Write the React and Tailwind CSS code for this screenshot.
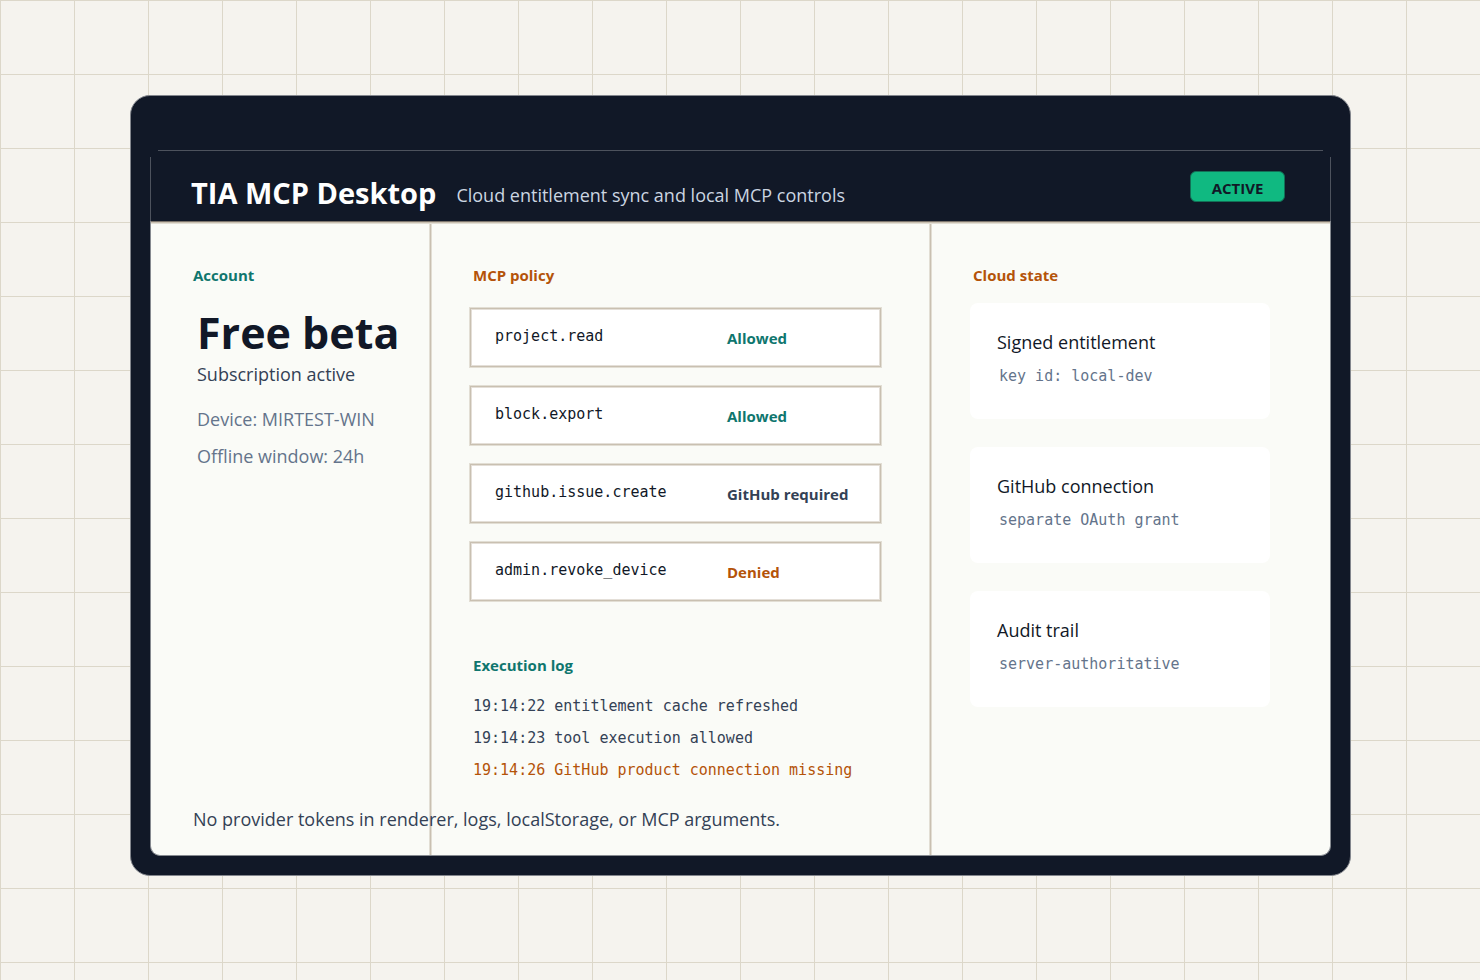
const tools = [
  { name: 'project.read', status: 'Allowed', tone: 'text-[#0f766e]' },
  { name: 'block.export', status: 'Allowed', tone: 'text-[#0f766e]' },
  { name: 'github.issue.create', status: 'GitHub required', tone: 'text-[#334155]' },
  { name: 'admin.revoke_device', status: 'Denied', tone: 'text-[#b45309]' },
];

const logs = [
  { text: '19:14:22 entitlement cache refreshed', tone: 'text-[#334155]' },
  { text: '19:14:23 tool execution allowed', tone: 'text-[#334155]' },
  { text: '19:14:26 GitHub product connection missing', tone: 'text-[#b45309]' },
];

const cloud = [
  { title: 'Signed entitlement', detail: 'key id: local-dev' },
  { title: 'GitHub connection', detail: 'separate OAuth grant' },
  { title: 'Audit trail', detail: 'server-authoritative' },
];

function SectionTitle({ tone, children }) {
  return <h2 className={`text-[15px] leading-6 font-bold ${tone}`}>{children}</h2>;
}

function Header() {
  return (
    <header className="flex h-[70px] items-start justify-between border-x pl-10 pr-[45px] [border-image:linear-gradient(to_bottom,transparent_7px,#4d525d_7px)_1]">
      <div className="flex items-start gap-5 pt-[22px]">
        <h1 className="text-[29px] leading-10 font-bold whitespace-nowrap text-white">TIA MCP Desktop</h1>
        <p className="pt-[10px] text-[18px] leading-6 whitespace-nowrap text-[#cbd5e1]">Cloud entitlement sync and local MCP controls</p>
      </div>
      <span className="mt-5 flex h-[31px] w-[95px] items-center justify-center rounded-md border border-[#127056] bg-[#10b981] pt-0.5 text-[15px] leading-5 font-bold text-[#111827]">
        ACTIVE
      </span>
    </header>
  );
}

function Account() {
  return (
    <section className="px-[42px] pt-[39px]">
      <SectionTitle tone="text-[#0f766e]">Account</SectionTitle>
      <div className="pl-1">
        <p className="mt-4 text-[43px] leading-[59px] font-bold whitespace-nowrap text-[#111827]">Free beta</p>
        <p className="text-[18px] leading-6 whitespace-nowrap text-[#334155]">Subscription active</p>
        <p className="mt-[21px] text-[18px] leading-6 whitespace-nowrap text-[#64748b]">Device: MIRTEST-WIN</p>
        <p className="mt-[13px] text-[18px] leading-6 whitespace-nowrap text-[#64748b]">Offline window: 24h</p>
      </div>
    </section>
  );
}

function Policy() {
  return (
    <section className="border-x border-[#c9c0b1] pt-[39px] pr-[49px] pl-[39px] shadow-[1px_0_#e2ded4,-1px_0_#e2ded4,inset_1px_0_#e2ded4,inset_-1px_0_#e2ded4]">
      <div className="pl-[3px]">
        <SectionTitle tone="text-[#b45309]">MCP policy</SectionTitle>
      </div>
      <ul className="mt-[21px] flex flex-col gap-[19px]">
        {tools.map((tool) => (
          <li key={tool.name} className="grid h-[59px] grid-cols-[232px_1fr] items-center border border-[#c9c0b1] bg-white pl-6 shadow-[0_0_0_1px_#e2ded4,inset_0_0_0_1px_#e4dfd8]">
            <span className="pb-1 font-['DejaVu_Sans_Mono',monospace] text-[15px] leading-5 text-[#111827]">{tool.name}</span>
            <span className={`text-[15px] leading-5 font-bold whitespace-nowrap ${tool.tone}`}>{tool.status}</span>
          </li>
        ))}
      </ul>
      <div className="mt-[52px] pl-[3px]">
        <SectionTitle tone="text-[#0f766e]">Execution log</SectionTitle>
        <ul className="mt-[13px] font-['DejaVu_Sans_Mono',monospace] text-[15px] leading-8 whitespace-nowrap">
          {logs.map((log) => (
            <li key={log.text} className={log.tone}>{log.text}</li>
          ))}
        </ul>
      </div>
    </section>
  );
}

function CloudState() {
  return (
    <section className="pt-[39px] pr-[60px] pl-[39px]">
      <div className="pl-[3px]">
        <SectionTitle tone="text-[#b45309]">Cloud state</SectionTitle>
      </div>
      <ul className="mt-4 flex flex-col gap-7">
        {cloud.map((item) => (
          <li key={item.title} className="h-[116px] rounded-lg bg-white px-[27px] pt-[27px]">
            <p className="text-[18px] leading-6 whitespace-nowrap text-[#111827]">{item.title}</p>
            <p className="mt-3 pl-0.5 font-['DejaVu_Sans_Mono',monospace] text-[15px] leading-5 whitespace-nowrap text-[#64748b]">{item.detail}</p>
          </li>
        ))}
      </ul>
    </section>
  );
}

export default function App() {
  return (
    <main className="min-h-screen bg-[#f5f3ee] bg-[linear-gradient(to_right,#dcd7c9_1px,transparent_1px),linear-gradient(to_bottom,#dcd7c9_1px,transparent_1px)] bg-[size:74px_74px] pt-[95px] pr-[129px] pb-[104px] pl-[130px] font-['Open_Sans',sans-serif]">
      <div className="rounded-[20px] border border-[#83868d] bg-[#111827] px-[19px] pt-[54px] pb-[19px]">
        <div className="mx-2 h-px bg-[#4d525d]" />
        <Header />
        <div className="relative rounded-b-[10px] border-x border-b border-[#868a90] bg-[#fafbf7]">
          <div className="h-[3px] border-t border-b border-t-[#7c756d] border-b-[#e2ded4] bg-[#c9c0b1]" />
          <div className="grid min-h-[631px] grid-cols-[279px_501px_1fr]">
            <Account />
            <Policy />
            <CloudState />
          </div>
          <p className="absolute bottom-6 left-[42px] text-[18px] leading-6 whitespace-nowrap text-[#334155]">
            No provider tokens in renderer, logs, localStorage, or MCP arguments.
          </p>
        </div>
      </div>
    </main>
  );
}
